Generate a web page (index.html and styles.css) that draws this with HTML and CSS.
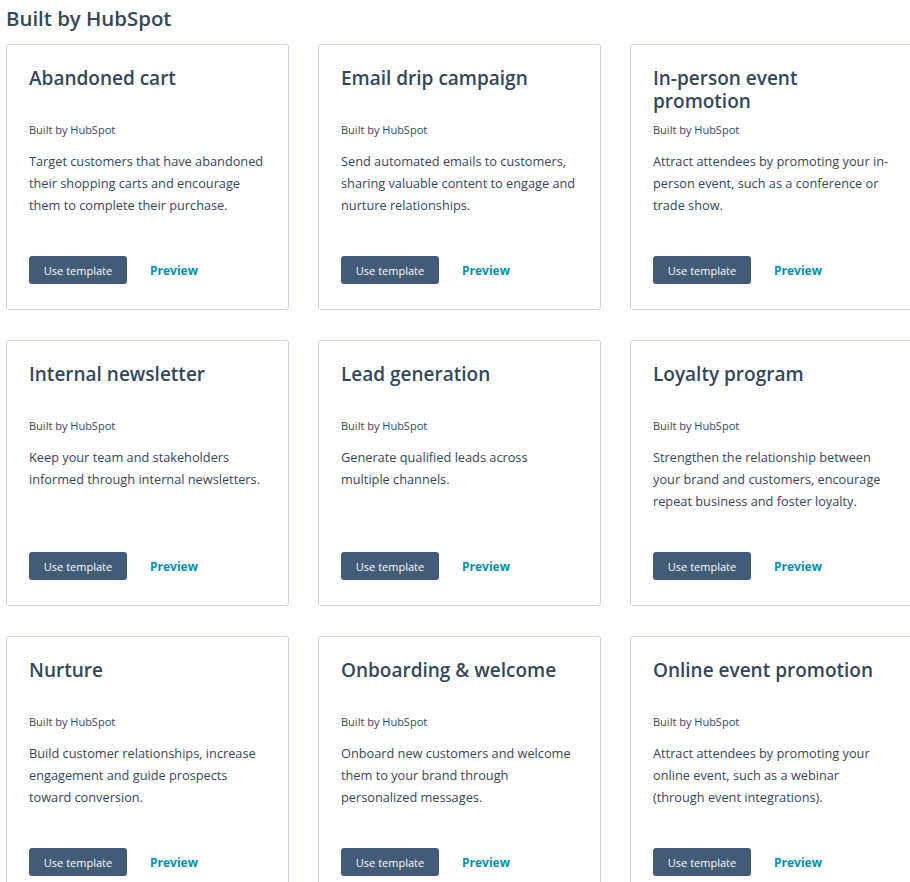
FILE: index.html
```html
<!DOCTYPE html>
<html lang="en">

<head>
  <meta charset="UTF-8" />
  <meta name="viewport" content="width=device-width, initial-scale=1.0" />
  <title>Templates</title>
  <link rel="stylesheet" href="styles.css">
</head>

<body>
  <h2 class="section-title">Built by HubSpot</h2>

  <div class="template-grid">
    <div class="template-card">
      <h3 class="card-title">Abandoned cart</h3>
      <p class="card-source">Built by HubSpot</p>
      <p class="card-desc">Target customers that have abandoned their shopping carts and encourage them to complete their purchase.</p>
      <div class="card-actions">
        <button class="btn-use" type="button">Use template</button>
        <a class="link-preview" href="#">Preview</a>
      </div>
    </div>

    <div class="template-card">
      <h3 class="card-title">Email drip campaign</h3>
      <p class="card-source">Built by HubSpot</p>
      <p class="card-desc">Send automated emails to customers, sharing valuable content to engage and nurture relationships.</p>
      <div class="card-actions">
        <button class="btn-use" type="button">Use template</button>
        <a class="link-preview" href="#">Preview</a>
      </div>
    </div>

    <div class="template-card">
      <h3 class="card-title">In-person event promotion</h3>
      <p class="card-source">Built by HubSpot</p>
      <p class="card-desc">Attract attendees by promoting your in-person event, such as a conference or trade show.</p>
      <div class="card-actions">
        <button class="btn-use" type="button">Use template</button>
        <a class="link-preview" href="#">Preview</a>
      </div>
    </div>

    <div class="template-card">
      <h3 class="card-title">Internal newsletter</h3>
      <p class="card-source">Built by HubSpot</p>
      <p class="card-desc">Keep your team and stakeholders informed through internal newsletters.</p>
      <div class="card-actions">
        <button class="btn-use" type="button">Use template</button>
        <a class="link-preview" href="#">Preview</a>
      </div>
    </div>

    <div class="template-card">
      <h3 class="card-title">Lead generation</h3>
      <p class="card-source">Built by HubSpot</p>
      <p class="card-desc">Generate qualified leads across multiple channels.</p>
      <div class="card-actions">
        <button class="btn-use" type="button">Use template</button>
        <a class="link-preview" href="#">Preview</a>
      </div>
    </div>

    <div class="template-card">
      <h3 class="card-title">Loyalty program</h3>
      <p class="card-source">Built by HubSpot</p>
      <p class="card-desc">Strengthen the relationship between your brand and customers, encourage repeat business and foster loyalty.</p>
      <div class="card-actions">
        <button class="btn-use" type="button">Use template</button>
        <a class="link-preview" href="#">Preview</a>
      </div>
    </div>

    <div class="template-card">
      <h3 class="card-title">Nurture</h3>
      <p class="card-source">Built by HubSpot</p>
      <p class="card-desc">Build customer relationships, increase engagement and guide prospects toward conversion.</p>
      <div class="card-actions">
        <button class="btn-use" type="button">Use template</button>
        <a class="link-preview" href="#">Preview</a>
      </div>
    </div>

    <div class="template-card">
      <h3 class="card-title">Onboarding &amp; welcome</h3>
      <p class="card-source">Built by HubSpot</p>
      <p class="card-desc">Onboard new customers and welcome them to your brand through personalized messages.</p>
      <div class="card-actions">
        <button class="btn-use" type="button">Use template</button>
        <a class="link-preview" href="#">Preview</a>
      </div>
    </div>

    <div class="template-card">
      <h3 class="card-title">Online event promotion</h3>
      <p class="card-source">Built by HubSpot</p>
      <p class="card-desc">Attract attendees by promoting your online event, such as a webinar (through event integrations).</p>
      <div class="card-actions">
        <button class="btn-use" type="button">Use template</button>
        <a class="link-preview" href="#">Preview</a>
      </div>
    </div>
  </div>
</body>

</html>
```

FILE: styles.css
```css
body {
  margin: 0;
  padding: 0 6px;
  font-family: "Open Sans", sans-serif;
  color: #33475b;
  background: #fff;
  overflow: hidden;
}

.section-title {
  margin: 0;
  padding-top: 5px;
  font-size: 20.4px;
  line-height: 26px;
  font-weight: 600;
  height: 39px;
}

.template-grid {
  display: grid;
  grid-template-columns: repeat(3, 283px);
  column-gap: 29px;
  row-gap: 30px;
}

.template-card {
  box-sizing: border-box;
  height: 266px;
  border: 1px solid #cbd6e2;
  border-radius: 3px;
  padding: 22px 22px 25px;
  display: flex;
  flex-direction: column;
}

.card-title {
  margin: 0;
  font-size: 19px;
  line-height: 23px;
  font-weight: 600;
  min-height: 46px;
}

.card-source {
  margin: 9px 0 0;
  font-size: 11px;
  line-height: 16px;
}

.card-desc {
  margin: 12px 0 0;
  font-size: 12.75px;
  line-height: 22px;
}

.card-actions {
  margin-top: auto;
  display: flex;
  align-items: center;
  gap: 23px;
}

.btn-use {
  background: #425b76;
  color: #fff;
  border: 0;
  border-radius: 3px;
  height: 28px;
  width: 98px;
  padding: 0;
  font-family: inherit;
  font-size: 11px;
  cursor: pointer;
}

.link-preview {
  color: #0091ae;
  font-weight: 700;
  font-size: 12px;
  text-decoration: none;
}
```
